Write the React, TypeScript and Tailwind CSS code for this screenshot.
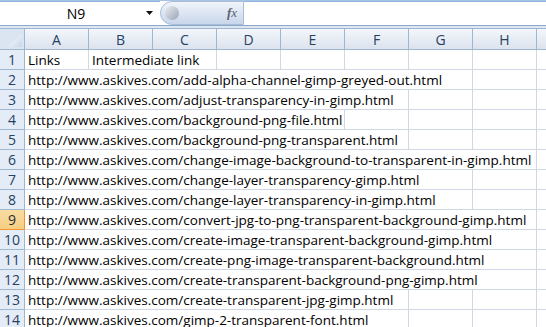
const links = [
  "http://www.askives.com/add-alpha-channel-gimp-greyed-out.html",
  "http://www.askives.com/adjust-transparency-in-gimp.html",
  "http://www.askives.com/background-png-file.html",
  "http://www.askives.com/background-png-transparent.html",
  "http://www.askives.com/change-image-background-to-transparent-in-gimp.html",
  "http://www.askives.com/change-layer-transparency-gimp.html",
  "http://www.askives.com/change-layer-transparency-in-gimp.html",
  "http://www.askives.com/convert-jpg-to-png-transparent-background-gimp.html",
  "http://www.askives.com/create-image-transparent-background-gimp.html",
  "http://www.askives.com/create-png-image-transparent-background.html",
  "http://www.askives.com/create-transparent-background-png-gimp.html",
  "http://www.askives.com/create-transparent-jpg-gimp.html",
  "http://www.askives.com/gimp-2-transparent-font.html",
];

const columns = ["A", "B", "C", "D", "E", "F", "G", "H"];

function Cell({ text }: { text?: string }) {
  return (
    <div className="w-16 h-5 shrink-0 border-r border-b border-[#d0d7e5] whitespace-nowrap">
      {text && (
        <span className="relative z-10 inline-block h-full bg-white pl-[3px] pr-[2px] leading-[21px]">
          {text}
        </span>
      )}
    </div>
  );
}

function Row({ num, cells, active }: { num: number; cells: (string | undefined)[]; active?: boolean }) {
  return (
    <div className="flex h-5">
      <div
        className={
          active
            ? "w-[25px] shrink-0 border-r border-b border-[#f29436] bg-gradient-to-b from-[#f9dca3] to-[#f6cf7f] text-center text-[14px] leading-[20px] text-[#1f2d3d]"
            : "w-[25px] shrink-0 border-r border-b border-[#9eb6ce] bg-[#e4ecf7] text-center text-[14px] leading-[20px] text-[#27415f]"
        }
      >
        {num}
      </div>
      {columns.map((c, i) => (
        <Cell key={c} text={cells[i]} />
      ))}
      <div className="flex-1 h-5 border-b border-[#d0d7e5]" />
    </div>
  );
}

export default function App() {
  return (
    <div
      className="w-[546px] h-[327px] overflow-hidden bg-white text-[13.5px] text-black"
      style={{ fontFamily: '"Open Sans", "Liberation Sans", sans-serif' }}
    >
      {/* formula bar */}
      <div className="h-[26px] flex border-t border-t-[#a9c4e2] border-b border-b-[#8ea8c8] text-[14px]">
        <div className="w-[158px] flex items-center border-t border-[#8db2e3] bg-white">
          <div className="flex-1 text-center pl-[6px] leading-[22px]">N9</div>
          <svg width="8" height="5" viewBox="0 0 8 5" className="mr-[4px]">
            <path d="M0 0 H7 L3.5 4 Z" fill="#111" />
          </svg>
        </div>
        <div className="w-[2px] border-t border-[#8db2e3] bg-white" />
        <div className="w-[84px] flex items-center justify-between rounded-l-full border border-[#a7bdd8] bg-gradient-to-b from-[#f1f5fb] to-[#c8d6ea] pl-[4px] pr-[6px]">
          <div className="w-[14px] h-[14px] rounded-full bg-gradient-to-br from-[#e9edf2] to-[#9aa6b4]" />
          <span className="text-[13px] italic text-[#5b6470]" style={{ fontFamily: '"Liberation Serif", serif' }}>
            <span className="font-bold">f</span>x
          </span>
        </div>
        <div className="flex-1 border-t border-[#8db2e3] bg-white" />
      </div>
      <div className="h-[2px] bg-[#dde7f3]" />

      {/* column headers */}
      <div className="flex h-[22px] border-t border-[#9eb6ce] text-[14px]">
        <div className="w-[25px] shrink-0 border-r border-b border-[#9eb6ce] bg-[#dbe5f2] flex items-end justify-end p-[2px]">
          <svg width="14" height="14" viewBox="0 0 14 14">
            <defs>
              <linearGradient id="tri" x1="0" y1="0" x2="1" y2="1">
                <stop offset="0" stopColor="#ffffff" />
                <stop offset="1" stopColor="#c9d6e8" />
              </linearGradient>
            </defs>
            <path d="M14 0 V14 H0 Z" fill="url(#tri)" />
          </svg>
        </div>
        {columns.map((c) => (
          <div
            key={c}
            className="w-16 shrink-0 border-r border-b border-[#9eb6ce] bg-gradient-to-b from-[#f3f6fb] to-[#dce3ee] text-center leading-[21px] text-[#27415f]"
          >
            {c}
          </div>
        ))}
        <div className="flex-1 border-b border-[#9eb6ce] bg-gradient-to-b from-[#f3f6fb] to-[#dce3ee]" />
      </div>

      <Row num={1} cells={["Links", "Intermediate link"]} />
      {links.map((l, i) => (
        <Row key={l} num={i + 2} cells={[l]} active={i + 2 === 9} />
      ))}
    </div>
  );
}
